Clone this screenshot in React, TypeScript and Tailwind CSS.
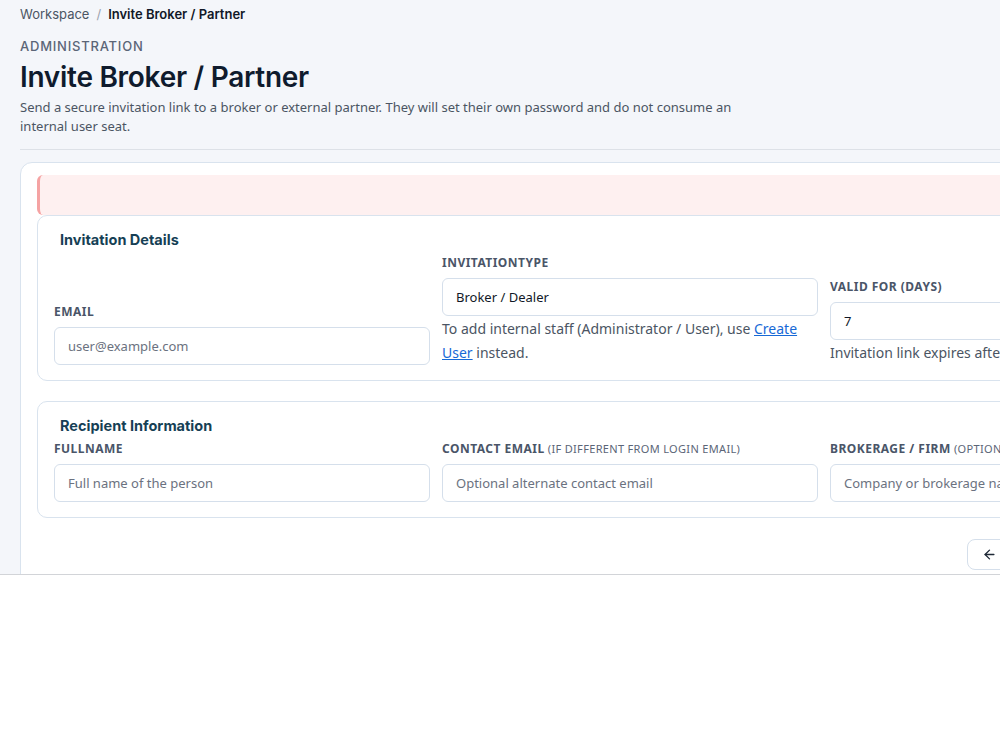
import React from "react";

const head = "font-['Inter',sans-serif]";
const body = "font-['Noto_Sans','Open_Sans',sans-serif]";

function Label({ children, sub }: { children: React.ReactNode; sub?: string }) {
  return (
    <label className={`block text-[12px] leading-[18px] font-bold uppercase tracking-[0.04em] text-[#4a5568] mb-[6px] ${body}`}>
      {children}
      {sub && <span className="font-normal text-[11px] tracking-[0.03em] text-[#5b6577]"> {sub}</span>}
    </label>
  );
}

function Input({ placeholder, value }: { placeholder?: string; value?: string }) {
  return (
    <input
      readOnly
      placeholder={placeholder}
      value={value ?? ""}
      className={`block w-full h-[38px] rounded-[6px] border border-[#d5dfeb] bg-white px-[13px] text-[13px] text-[#111827] placeholder:text-[#6b7280] outline-none ${body}`}
    />
  );
}

function Section({ title, children }: { title: string; children: React.ReactNode }) {
  return (
    <div className="rounded-[10px] border border-[#d9e3ee] bg-white px-4 pt-[14px] pb-[15px]">
      <div className={`pl-[6px] text-[14.5px] leading-5 font-bold text-[#163f55] mb-[4px] ${head}`}>{title}</div>
      {children}
    </div>
  );
}

export default function App() {
  return (
    <div className="h-[575px] w-[1000px] overflow-hidden border-b border-[#d2d4d8] bg-[#f4f6fa]">
      <div className="w-[1260px] px-5 pt-[5px]">
        <div className={`flex items-center gap-[7px] text-[13px] leading-[18px] ${head}`}>
          <span className="text-[#4b5563]">Workspace</span>
          <span className="text-[#9ca3af]">/</span>
          <span className="font-semibold text-[#111827]">Invite Broker / Partner</span>
        </div>
        <div className={`mt-[15px] text-[13px] leading-[16px] font-medium tracking-[0.06em] text-[#5b6577] ${head}`}>
          ADMINISTRATION
        </div>
        <h1 className={`mt-[5px] text-[28px] leading-[36px] font-semibold tracking-[-0.01em] text-[#0f1b2d] ${head}`}>
          Invite Broker / Partner
        </h1>
        <p className={`mt-[3px] w-[750px] text-[13px] leading-[19px] text-[#4b5563] ${body}`}>
          Send a secure invitation link to a broker or external partner. They will set their own password and do not consume an internal user seat.
        </p>
        <div className="mt-[13px] border-t border-[#dde1e7]" />
        <div className="mt-[12px] rounded-[12px] border border-[#d9e3ee] bg-white px-4 pt-3 pb-4">
          <div className="h-[40px] rounded-[6px] border-l-[3px] border-[#f5a3a3] bg-[#fef0f0]" />
          <Section title="Invitation Details">
            <div className="grid grid-cols-3 gap-3 items-end">
              <div>
                <Label>Email</Label>
                <Input placeholder="user@example.com" />
              </div>
              <div>
                <Label>InvitationType</Label>
                <Input value="Broker / Dealer" />
                <p className={`mt-[1px] text-[14px] leading-6 text-[#4b5563] ${body}`}>
                  To add internal staff (Administrator / User), use{" "}
                  <a className="text-[#1769d6] underline">Create User</a> instead.
                </p>
              </div>
              <div>
                <Label>Valid For (Days)</Label>
                <Input value="7" />
                <p className={`mt-[1px] text-[14px] leading-6 text-[#4b5563] ${body}`}>
                  Invitation link expires after this many days.
                </p>
              </div>
            </div>
          </Section>
          <div className="mt-5">
            <Section title="Recipient Information">
              <div className="grid grid-cols-3 gap-3 items-end">
                <div>
                  <Label>FullName</Label>
                  <Input placeholder="Full name of the person" />
                </div>
                <div>
                  <Label sub="(if different from login email)">Contact Email</Label>
                  <Input placeholder="Optional alternate contact email" />
                </div>
                <div>
                  <Label sub="(optional)">Brokerage / Firm</Label>
                  <Input placeholder="Company or brokerage name" />
                </div>
              </div>
            </Section>
          </div>
          <div className="mt-[21px] -mr-4 flex justify-end gap-2">
            <button className={`flex h-[31px] items-center gap-2 rounded-[8px] border border-[#d5dfeb] bg-white px-[14px] text-[13px] font-semibold text-[#1f2937] ${body}`}>
              <svg width="15" height="15" viewBox="0 0 24 24" fill="none" stroke="#1f2937" strokeWidth="2.2" strokeLinecap="round" strokeLinejoin="round">
                <path d="M19 12H5" />
                <path d="M12 19l-7-7 7-7" />
              </svg>
              Back to Users
            </button>
            <button className={`flex h-[31px] items-center gap-2 rounded-[8px] bg-[#1769d6] px-[14px] text-[13px] font-semibold text-white ${body}`}>
              Send Invitation
            </button>
          </div>
        </div>
      </div>
    </div>
  );
}
